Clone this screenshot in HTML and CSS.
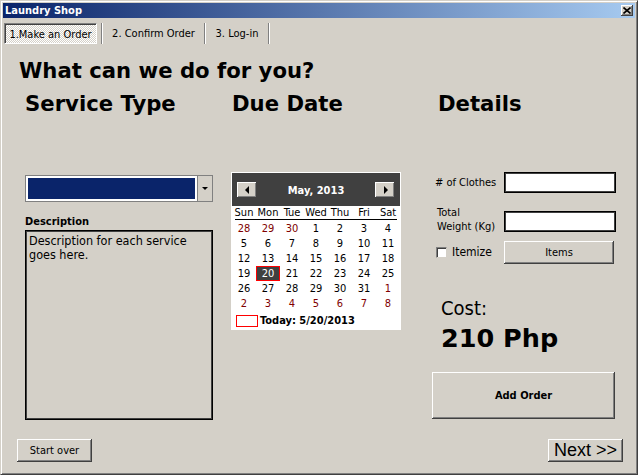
FILE: index.html
```html
<!DOCTYPE html>
<html>
<head>
<meta charset="utf-8">
<title>Laundry Shop</title>
<link rel="stylesheet" href="styles.css">
</head>
<body>
<div class="window">
  <div class="titlebar">
    <span class="title">Laundry Shop</span>
    <span class="close-btn">
      <svg width="8" height="7" viewBox="0 0 8 7"><path d="M0.5 0.5 L7.5 6.5 M7.5 0.5 L0.5 6.5" stroke="#000" stroke-width="1.6" fill="none"/></svg>
    </span>
  </div>
  <div class="tabs">
    <div class="tab tab-active">1.Make an Order</div>
    <div class="tab-sep sep-first"></div>
    <div class="tab tab-2">2. Confirm Order</div>
    <div class="tab-sep"></div>
    <div class="tab tab-3">3. Log-in</div>
    <div class="tab-sep"></div>
  </div>
  <div class="page">
    <h1 class="page-title">What can we do for you?</h1>
    <div class="columns">
      <section class="col col-service">
        <h2 class="col-heading">Service Type</h2>
        <div class="combo">
          <div class="combo-value"></div>
          <div class="combo-arrow"><span class="arrow-down"></span></div>
        </div>
        <div class="desc-label">Description</div>
        <div class="desc-box">Description for each service goes here.</div>
      </section>
      <section class="col col-date">
        <h2 class="col-heading heading-date">Due Date</h2>
        <div class="calendar">
          <div class="cal-head">
            <span class="cal-nav"><span class="tri-left"></span></span>
            <span class="cal-month">May, 2013</span>
            <span class="cal-nav"><span class="tri-right"></span></span>
          </div>
          <div class="cal-days">
            <span>Sun</span><span>Mon</span><span>Tue</span><span>Wed</span><span>Thu</span><span>Fri</span><span>Sat</span>
          </div>
          <div class="cal-grid">
            <span class="other">28</span><span class="other">29</span><span class="other">30</span><span>1</span><span>2</span><span>3</span><span>4</span>
            <span>5</span><span>6</span><span>7</span><span>8</span><span>9</span><span>10</span><span>11</span>
            <span>12</span><span>13</span><span>14</span><span>15</span><span>16</span><span>17</span><span>18</span>
            <span>19</span><span class="selected">20</span><span>21</span><span>22</span><span>23</span><span>24</span><span>25</span>
            <span>26</span><span>27</span><span>28</span><span>29</span><span>30</span><span>31</span><span class="other">1</span>
            <span class="other">2</span><span class="other">3</span><span class="other">4</span><span class="other">5</span><span class="other">6</span><span class="other">7</span><span class="other">8</span>
          </div>
          <div class="cal-today">
            <span class="today-box"></span>
            <span class="today-text">Today: 5/20/2013</span>
          </div>
        </div>
      </section>
      <section class="col col-details">
        <h2 class="col-heading heading-details">Details</h2>
        <div class="field field-clothes">
          <span class="field-label">&#35; of Clothes</span>
          <span class="textbox"></span>
        </div>
        <div class="field field-weight">
          <span class="field-label label-two">Total<br>Weight (Kg)</span>
          <span class="textbox"></span>
        </div>
        <div class="field field-itemize">
          <span class="check-wrap"><span class="checkbox"></span><span class="check-text">Itemize</span></span>
          <span class="btn btn-items">Items</span>
        </div>
        <div class="cost-label">Cost:</div>
        <div class="cost-value">210 Php</div>
        <span class="btn btn-add">Add Order</span>
      </section>
    </div>
  </div>
  <div class="footer">
    <span class="btn btn-start">Start over</span>
    <span class="btn btn-next">Next &gt;&gt;</span>
  </div>
</div>
</body>
</html>
```
FILE: styles.css
```css
html, body {
  margin: 0;
  padding: 0;
  background: #d4d0c8;
}

.window {
  box-sizing: border-box;
  width: 638px;
  height: 475px;
  padding: 1px;
  background: #d4d0c8;
  border: 1px solid;
  border-color: #d4d0c8 #404040 #404040 #d4d0c8;
  box-shadow: inset 1px 1px 0 #ffffff, inset -1px -1px 0 #808080;
  font-family: "DejaVu Sans Condensed", "DejaVu Sans", sans-serif;
  font-size: 11px;
  color: #000;
  overflow: hidden;
}

.titlebar {
  margin: 1px 1px 0 1px;
  height: 15px;
  background: linear-gradient(to right, #0a246a 0%, #a6caf0 100%);
  display: flex;
  align-items: center;
  justify-content: space-between;
  padding: 0 2px 0 2px;
}

.title {
  color: #fff;
  font-weight: bold;
  font-size: 11px;
  line-height: 13px;
}

.close-btn {
  box-sizing: border-box;
  width: 12px;
  height: 11px;
  background: #d4d0c8;
  display: flex;
  align-items: center;
  justify-content: center;
  box-shadow: inset -1px -1px 0 #404040, inset 1px 1px 0 #ffffff, inset -2px -2px 0 #808080;
}

.close-btn svg { display: block; }

.tabs {
  display: flex;
  margin-top: 5px;
  padding-left: 2px;
  height: 21px;
}

.tab {
  box-sizing: border-box;
  height: 21px;
  display: flex;
  align-items: center;
  justify-content: center;
  line-height: 13px;
  white-space: nowrap;
}

.tab-active {
  width: 93px;
  border: 1px solid;
  border-color: #808080 #ffffff #ffffff #808080;
  box-shadow: inset 1px 1px 0 #404040;
  background-color: #d4d0c8;
  background-image: repeating-conic-gradient(#ffffff 0 25%, #d4d0c8 0 50%);
  background-size: 2px 2px;
  padding-top: 1px;
}

.tab-2 { width: 101px; }
.tab-3 { width: 62px; }

.tab-sep {
  width: 1px;
  height: 21px;
  background: #808080;
  border-right: 1px solid #ffffff;
}

.sep-first { margin-left: 4px; }

.page {
  padding-left: 18px;
}

.page-title {
  margin: 15px 0 0 -1px;
  font-family: "DejaVu Sans", sans-serif;
  font-weight: bold;
  font-size: 21.2px;
  line-height: 24px;
}

.columns {
  display: flex;
  align-items: flex-start;
  margin-top: 9px;
  padding-left: 5px;
}

.col-heading {
  margin: 0;
  font-family: "DejaVu Sans", sans-serif;
  font-weight: bold;
  font-size: 21.2px;
  line-height: 24px;
  white-space: nowrap;
}

.heading-date { padding-left: 1px; }
.heading-details { padding-left: 6px; }

.col-service { width: 188px; }
.col-date { width: 170px; margin-left: 18px; }
.col-details { width: 184px; margin-left: 31px; }

/* combo box */
.combo {
  box-sizing: border-box;
  margin-top: 59px;
  height: 27px;
  border: 1px solid #808080;
  background: #ffffff;
  display: flex;
}

.combo-value {
  flex: 1;
  margin: 2px 2px 2px 2px;
  background: #0a246a;
}

.combo-arrow {
  box-sizing: border-box;
  width: 15px;
  border-left: 1px solid #808080;
  background: #d4d0c8;
  display: flex;
  align-items: center;
  justify-content: center;
}

.arrow-down {
  width: 0;
  height: 0;
  border-left: 3px solid transparent;
  border-right: 3px solid transparent;
  border-top: 3px solid #000;
}

.desc-label {
  margin-top: 13px;
  font-weight: bold;
  line-height: 13px;
}

.desc-box {
  box-sizing: border-box;
  margin-top: 2px;
  height: 190px;
  border: 1px solid #000;
  box-shadow: inset 0 0 0 1px #404040;
  padding: 3px 3px;
  font-size: 12.5px;
  line-height: 14px;
}

/* calendar */
.calendar {
  box-sizing: border-box;
  margin-top: 56px;
  width: 170px;
  height: 158px;
  background: #ffffff;
  border: 1px solid #ffffff;
}

.cal-head {
  height: 33px;
  background: #404040;
  display: flex;
  align-items: center;
  justify-content: space-between;
  padding: 0 5px;
}

.cal-nav {
  box-sizing: border-box;
  width: 20px;
  height: 16px;
  background: #d4d0c8;
  display: flex;
  align-items: center;
  justify-content: center;
  box-shadow: inset -1px -1px 0 #404040, inset 1px 1px 0 #ffffff, inset -2px -2px 0 #808080;
}

.tri-left {
  width: 0; height: 0;
  border-top: 4px solid transparent;
  border-bottom: 4px solid transparent;
  border-right: 4px solid #000;
  margin-right: 1px;
}

.tri-right {
  width: 0; height: 0;
  border-top: 4px solid transparent;
  border-bottom: 4px solid transparent;
  border-left: 4px solid #000;
  margin-left: 1px;
}

.cal-month {
  color: #fff;
  font-weight: bold;
  font-size: 11px;
  margin-top: 1px;
}

.cal-days {
  display: grid;
  grid-template-columns: repeat(7, 24px);
  height: 14px;
  line-height: 14px;
  text-align: center;
  position: relative;
}

.cal-days::after {
  content: "";
  position: absolute;
  left: 3px;
  right: 3px;
  bottom: 0;
  height: 1px;
  background: #000;
}

.cal-grid {
  margin-top: 1px;
  display: grid;
  grid-template-columns: repeat(7, 24px);
  grid-auto-rows: 15px;
  line-height: 15px;
  text-align: center;
}

.cal-grid .other { color: #800000; }

.cal-grid .selected {
  box-sizing: border-box;
  background: #404040;
  color: #fff;
  border: 1px solid #ff0000;
  line-height: 13px;
}

.cal-today {
  display: flex;
  align-items: center;
  margin-top: 4px;
  padding-left: 4px;
  height: 12px;
}

.today-box {
  box-sizing: border-box;
  width: 22px;
  height: 12px;
  border: 1px solid #ff0000;
}

.today-text {
  margin-left: 2px;
  font-weight: bold;
  line-height: 12px;
}

/* details */
.field {
  display: flex;
  align-items: center;
  height: 21px;
}

.field-clothes { margin-top: 56px; }
.field-weight { margin-top: 18px; }
.field-itemize { margin-top: 9px; height: 23px; }

.field-label {
  width: 72px;
  box-sizing: border-box;
  padding-left: 3px;
  line-height: 13px;
  white-space: nowrap;
}

.label-two {
  align-self: flex-start;
  margin-top: -5px;
  padding-left: 5px;
  line-height: 14px;
}

.textbox {
  box-sizing: border-box;
  width: 112px;
  height: 21px;
  background: #ffffff;
  border: 1px solid #000;
  box-shadow: inset 0 0 0 1px #404040;
}

.check-wrap {
  width: 72px;
  display: flex;
  align-items: center;
  padding-left: 4px;
  box-sizing: border-box;
}

.checkbox {
  box-sizing: border-box;
  width: 11px;
  height: 11px;
  background: #fff;
  border: 1px solid;
  border-color: #808080 #d4d0c8 #d4d0c8 #808080;
  box-shadow: inset 1px 1px 0 #404040;
}

.check-text {
  margin-left: 5px;
  font-size: 12px;
  line-height: 13px;
}

.btn {
  box-sizing: border-box;
  display: flex;
  align-items: center;
  justify-content: center;
  background: #d4d0c8;
  box-shadow: inset -1px -1px 0 #404040, inset 1px 1px 0 #ffffff, inset -2px -2px 0 #808080;
  white-space: nowrap;
}

.btn-items {
  width: 110px;
  height: 23px;
}

.cost-label {
  margin-top: 32px;
  padding-left: 9px;
  font-size: 20px;
  line-height: 24px;
}

.cost-value {
  margin-top: 2px;
  padding-left: 9px;
  font-family: "DejaVu Sans", sans-serif;
  font-weight: bold;
  font-size: 25.5px;
  line-height: 32px;
}

.btn-add {
  margin-top: 18px;
  width: 183px;
  height: 47px;
  font-weight: bold;
}

/* footer */
.footer {
  display: flex;
  justify-content: space-between;
  margin-top: 19px;
  padding: 0 13px 0 15px;
}

.btn-start {
  width: 75px;
  height: 23px;
}

.btn-next {
  width: 75px;
  height: 23px;
  font-family: "Liberation Sans", Arial, sans-serif;
  font-size: 18px;
}
```
